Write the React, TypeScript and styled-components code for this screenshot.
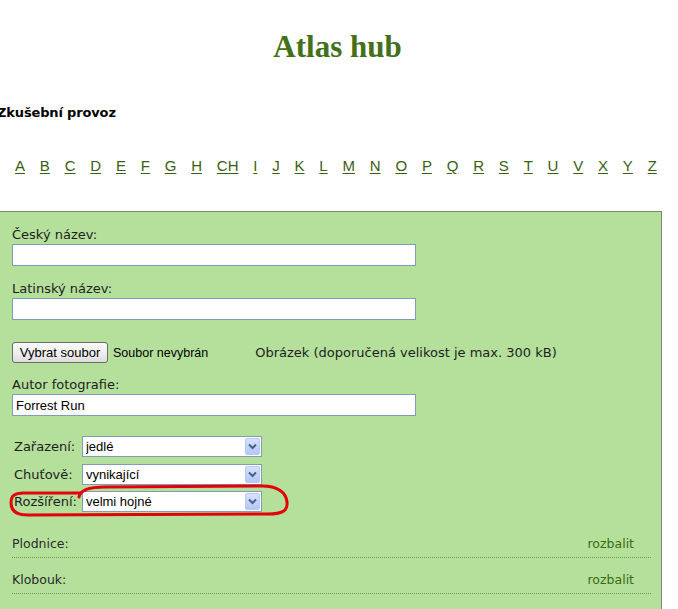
import React from "react";
import styled, { createGlobalStyle } from "styled-components";

const Global = createGlobalStyle`
  html, body { margin: 0; padding: 0; background: #ffffff; }
  body { overflow: hidden; }
`;

const Page = styled.div`
  position: relative;
  margin-left: -3px;
  padding-top: 29px;
  width: 681px;
  font-family: "DejaVu Sans", Verdana, sans-serif;
`;

const Title = styled.h1`
  margin: 0;
  font-family: "Liberation Serif", "Times New Roman", serif;
  font-weight: bold;
  font-size: 31px;
  line-height: 36px;
  color: #44701a;
  text-align: center;
`;

const Notice = styled.div`
  margin-top: 40px;
  font-family: "DejaVu Sans", Verdana, sans-serif;
  font-weight: bold;
  font-size: 13px;
  letter-spacing: -0.15px;
  line-height: 16px;
  color: #000;
`;

const Alphabet = styled.nav`
  margin-top: 35px;
  padding: 0 21px 0 18px;
  display: flex;
  justify-content: space-between;
  font-family: "Liberation Sans", Arial, sans-serif;
  font-size: 15px;
  line-height: 20px;
`;

const Letter = styled.a`
  color: #3b5e12;
  text-decoration: underline;
  text-underline-offset: 2px;
`;

const Panel = styled.section`
  margin-top: 35px;
  width: 665px;
  box-sizing: border-box;
  background: #b4e09b;
  border: 1px solid #7c8876;
  border-bottom: none;
  padding: 15px 0 40px 14px;
`;

const Label = styled.label`
  display: block;
  font-size: 13px;
  line-height: 16px;
  color: #1e1e1e;
`;

const Field = styled.div<{ $top?: number }>`
  margin-top: ${(p) => p.$top ?? 0}px;
`;

const TextInput = styled.input`
  display: block;
  margin-top: 1px;
  width: 404px;
  height: 22px;
  box-sizing: border-box;
  border: 1px solid #7f9db9;
  background: #fff;
  padding: 1px 3px;
  font-family: "Liberation Sans", Arial, sans-serif;
  font-size: 13px;
  color: #000;
  outline: none;
`;

const FileRow = styled.div`
  margin-top: 22px;
  display: flex;
  align-items: center;
  height: 21px;
`;

const FileButton = styled.button`
  height: 21px;
  width: 96px;
  padding: 0;
  box-sizing: border-box;
  border: 1px solid #6b6b6b;
  border-radius: 3px;
  background: linear-gradient(#fbfbfb, #ececec 60%, #dcdcdc);
  font-family: "Liberation Sans", Arial, sans-serif;
  font-size: 13px;
  color: #000;
`;

const FileStatus = styled.span`
  margin-left: 5px;
  font-family: "Liberation Sans", Arial, sans-serif;
  font-size: 12.5px;
  color: #000;
`;

const Hint = styled.span`
  margin-left: 47px;
  font-size: 13px;
  color: #1e1e1e;
`;

const SelectGrid = styled.div`
  margin-top: 20px;
  padding-left: 2px;
  display: grid;
  grid-template-columns: auto 180px;
  justify-content: start;
  align-items: center;
  column-gap: 5px;
  row-gap: 6.5px;
`;

const SelectLabel = styled.span`
  font-size: 13px;
  color: #1e1e1e;
`;

const SelectBox = styled.div`
  position: relative;
  width: 180px;
  height: 21px;
`;

const SelectControl = styled.select`
  appearance: none;
  -webkit-appearance: none;
  width: 100%;
  height: 100%;
  box-sizing: border-box;
  border: 1px solid #7f9db9;
  background: #fff;
  padding: 0 0 0 3px;
  margin: 0;
  font-family: "Liberation Sans", Arial, sans-serif;
  font-size: 13px;
  color: #000;
  outline: none;
  border-radius: 0;
`;

const ArrowButton = styled.span`
  position: absolute;
  top: 2px;
  right: 2px;
  width: 15px;
  height: 17px;
  box-sizing: border-box;
  border: 1px solid #b9c9ef;
  border-radius: 2px;
  background: linear-gradient(#d7e2fe, #c2d3fc 50%, #b4c7f6);
  display: flex;
  align-items: center;
  justify-content: center;
  pointer-events: none;
`;

const Row = styled.div<{ $top: number }>`
  margin-top: ${(p) => p.$top}px;
  margin-right: 10px;
  padding: 0 17px 5px 0;
  display: flex;
  justify-content: space-between;
  font-size: 12.5px;
  line-height: 16px;
  border-bottom: 1px dotted #6f9a45;
`;

const RowTitle = styled.span`
  color: #2a2a2a;
`;

const Toggle = styled.a`
  color: #3d6b12;
  text-decoration: none;
`;

const Annotation = styled.svg`
  position: absolute;
  left: 3px;
  top: 0;
  pointer-events: none;
`;

const letters = ["A","B","C","D","E","F","G","H","CH","I","J","K","L","M","N","O","P","Q","R","S","T","U","V","X","Y","Z"];

const Chevron = () => (
  <svg width="9" height="7" viewBox="0 0 9 7">
    <path d="M1 1.5 L4.5 5 L8 1.5" fill="none" stroke="#4d6185" strokeWidth="2" />
  </svg>
);

const Select = ({ value }: { value: string }) => (
  <SelectBox>
    <SelectControl defaultValue={value}>
      <option>{value}</option>
    </SelectControl>
    <ArrowButton>
      <Chevron />
    </ArrowButton>
  </SelectBox>
);

export default function App() {
  return (
    <>
      <Global />
      <Page>
        <Title>Atlas hub</Title>
        <Notice>Zkušební provoz</Notice>
        <Alphabet>
          {letters.map((l) => (
            <Letter key={l} href="#">{l}</Letter>
          ))}
        </Alphabet>
        <Panel>
          <Field>
            <Label>Český název:</Label>
            <TextInput type="text" />
          </Field>
          <Field $top={15}>
            <Label>Latinský název:</Label>
            <TextInput type="text" />
          </Field>
          <FileRow>
            <FileButton>Vybrat soubor</FileButton>
            <FileStatus>Soubor nevybrán</FileStatus>
            <Hint>Obrázek (doporučená velikost je max. 300 kB)</Hint>
          </FileRow>
          <Field $top={14}>
            <Label>Autor fotografie:</Label>
            <TextInput type="text" defaultValue="Forrest Run" />
          </Field>
          <SelectGrid>
            <SelectLabel>Zařazení:</SelectLabel>
            <Select value="jedlé" />
            <SelectLabel>Chuťově:</SelectLabel>
            <Select value="vynikající" />
            <SelectLabel>Rozšíření:</SelectLabel>
            <Select value="velmi hojné" />
          </SelectGrid>
          <Row $top={24}>
            <RowTitle>Plodnice:</RowTitle>
            <Toggle href="#">rozbalit</Toggle>
          </Row>
          <Row $top={14}>
            <RowTitle>Klobouk:</RowTitle>
            <Toggle href="#">rozbalit</Toggle>
          </Row>
        </Panel>
        <Annotation width="678" height="609" viewBox="0 0 678 609">
          <path
            d="M79 497 C80 490 88 487 105 487 L262 486 C277 486 286 492 287 502 C288 511 282 514 268 514 L28 515 C16 515 11 510 11 503 C11 496 14 493 24 493 L80 493"
            fill="none"
            stroke="#e4000b"
            strokeWidth="3"
            strokeLinecap="round"
            strokeLinejoin="round"
          />
        </Annotation>
      </Page>
    </>
  );
}
